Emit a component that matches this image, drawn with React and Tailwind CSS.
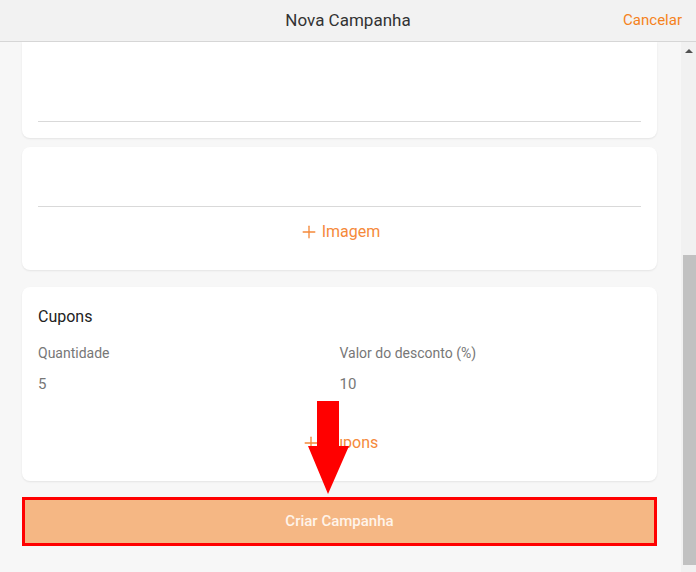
import { Plus } from 'lucide-react'

const font = { fontFamily: 'Roboto, "Liberation Sans", sans-serif' }

function AddLink({ label }) {
  return (
    <button type="button" className="flex items-center gap-[3px] text-[16px] text-[#f5893a]">
      <Plus className="w-[20px] h-[20px]" strokeWidth={1.6} />
      {label}
    </button>
  )
}

export default function App() {
  return (
    <div style={font} className="w-[696px] h-[572px] flex flex-col bg-[#f7f7f7] overflow-hidden relative">
      <header className="h-[42px] shrink-0 flex items-center justify-center relative bg-[#f2f2f2] border-b border-[#d6d6d6]">
        <h1 className="text-[17px] text-[#333]">Nova Campanha</h1>
        <button type="button" className="absolute right-[14px] text-[15px] text-[#f58220]">Cancelar</button>
      </header>

      <div className="flex-1 flex min-h-0">
        <main className="flex-1 pl-[22px] pr-[24px] flex flex-col">
          <div className="h-[96px] bg-white rounded-b-lg shadow-[0_1px_2px_rgba(0,0,0,0.08)] px-4 flex flex-col justify-end pb-[16px]">
            <div className="border-t border-[#d9d9d9]" />
          </div>

          <div className="mt-[9px] h-[123px] bg-white rounded-lg shadow-[0_1px_2px_rgba(0,0,0,0.08)] px-4 pt-[59px]">
            <div className="border-t border-[#d9d9d9]" />
            <div className="flex justify-center mt-[13px]">
              <AddLink label="Imagem" />
            </div>
          </div>

          <div className="mt-[17px] h-[194px] bg-white rounded-lg shadow-[0_1px_2px_rgba(0,0,0,0.08)] px-4 pt-[18px]">
            <p className="text-[16px] text-[#222]">Cupons</p>
            <div className="grid grid-cols-2 mt-[14px]">
              <div>
                <p className="text-[14px] text-[#777]">Quantidade</p>
                <p className="text-[15px] text-[#777] mt-[9px]">5</p>
              </div>
              <div>
                <p className="text-[14px] text-[#777]">Valor do desconto (%)</p>
                <p className="text-[15px] text-[#777] mt-[9px]">10</p>
              </div>
            </div>
            <div className="flex justify-center mt-[35px]">
              <AddLink label="Cupons" />
            </div>
          </div>

          <button type="button"
            className="mt-[16px] h-[49px] bg-[#f5b784] border-[3px] border-[#ff0000] text-[#fff4ea] text-[15px] font-medium">
            Criar Campanha
          </button>
        </main>

        <div className="w-[15px] shrink-0 bg-[#f1f1f1] flex flex-col items-end relative">
          <div className="w-full h-[17px] flex items-center justify-center">
            <div className="w-0 h-0 border-l-[4px] border-r-[4px] border-b-[4px] border-l-transparent border-r-transparent border-b-[#505050]" />
          </div>
          <div className="absolute left-[2px] right-0 top-[213px] h-[310px] bg-[#c1c1c1]" />
        </div>
      </div>

      <svg className="absolute left-[306px] top-[400px]" width="45" height="96" viewBox="0 0 45 96">
        <path d="M11 1 H33 V46 H43 L22 94 L2 46 H11 Z" fill="#ff0000" />
      </svg>
    </div>
  )
}
